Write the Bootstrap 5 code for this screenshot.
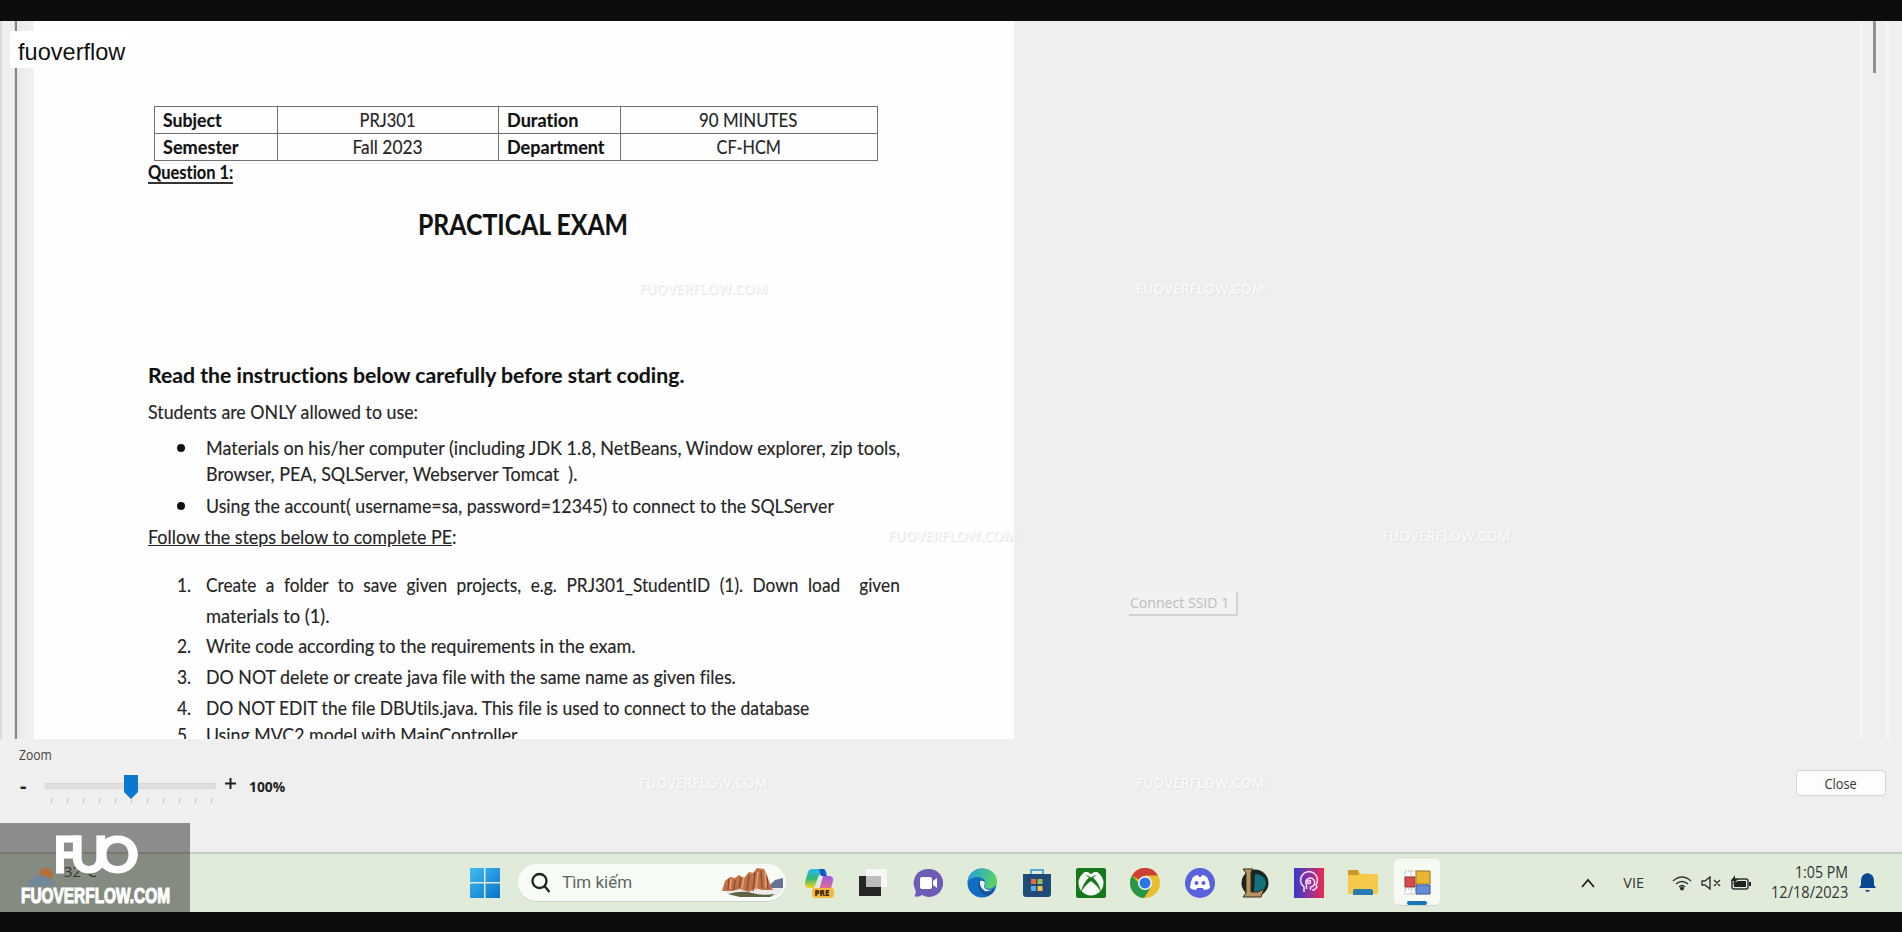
<!DOCTYPE html>
<html lang="en">
<head>
<meta charset="utf-8">
<title>PRJ301 Practical Exam</title>
<link href="https://cdn.jsdelivr.net/npm/bootstrap@5.3.0/dist/css/bootstrap.min.css" rel="stylesheet">
<style>
body{background:#0d0d0d;width:1902px;height:932px;overflow:hidden;font-family:"Open Sans",sans-serif;color:#222}
.screen{margin-top:21px;height:891px;background:#efefef}
.viewer{height:718px;overflow:hidden}
.gutter{width:15px;border-right:1px solid #dcdcdc;background:linear-gradient(90deg,#dadada 2px,#efefef 2px)}
.edge-line{width:2px;background:#858585}
.margin-strip{width:17px;background:linear-gradient(90deg,#e9e9e9,#f2f2f2)}
.sheet{width:980px;background:#fefefe;padding:85px 0 0 113.500px;font-family:Lato,sans-serif;font-size:18.6px;color:#252525;font-variant-ligatures:none;-webkit-text-stroke:.15px #252525}
.scrolls{width:42px;border-left:3px solid #f5f5f5}
.thumb-line{width:3px;height:52px;margin-left:10px;background:#929292}
.scroll-edge{width:3px;margin-left:10px;background:#f6f6f6;height:718px}
.fit{display:inline-block;white-space:nowrap;transform-origin:0 50%}
.info{width:724px;height:55px;margin-left:6px;display:grid;grid-template-columns:122px 220px 121px 1fr;grid-template-rows:26px 26px;gap:1px;padding:1px;background:#727272;line-height:26px}
.info>div{background:#fefefe;padding-left:8px;overflow:hidden}
.info>.mid{padding:0;text-align:center}
.info .mid .fit{transform-origin:50% 50%}
.heavy{font-weight:700;color:#111}
.q1{height:22px;line-height:22px;margin-top:0}
.under{border-bottom:2px solid #333;line-height:19px}
.title{font-size:28px;line-height:40px;height:40px;margin:21px 0 0 270.500px}
.lead-line{font-size:21.6px;line-height:30px;height:30px;margin-top:116px}
.ln{height:26px;line-height:26px;display:flex}
.mk{width:58px;padding-left:29px;flex:none}
.dot{width:8px;height:8px;border-radius:50%;background:#111;display:block;margin:9px 0 0 0}
.steps{margin-top:20px}
.steps .ln{height:30.7px;line-height:30.7px}
.wide{word-spacing:5.5px}
.panel{height:113px;padding-left:19px;position:relative}
.zoomlabel{font-size:14px;height:24px;line-height:20px;padding-top:6px;color:#444}
.track{width:171px;height:6px;background:#dfdfdf;border:1px solid #d8d8d8}
.zoomrow{height:28px;margin-top:9px}
.ticks{width:171px;height:5px;margin:-2px 0 0 27px;padding:0 5px}
.ticks i{width:1px;height:5px;background:#c4c4c4}
.closebtn{width:90px;height:26px;border:1px solid #d5d5d5;border-radius:4px;background:#fdfdfd;font-size:14px;line-height:23px;padding:0;position:absolute;right:16px;top:31px;color:#333;text-align:center}
.closebtn .fit{transform-origin:50% 50%}
.taskbar{height:60px;border-top:2px solid #c5cdc1;background:#e0ecd9;padding-left:470px}
.taskbar svg{flex:none;display:block}
.pill{width:268px;height:38px;margin-left:18px;border-radius:19px;background:#f8fcf6;border-bottom:1px solid #ccd5c7;padding-left:13px;font-size:17px;color:#626662;font-family:Roboto,sans-serif}
.apps{margin-left:18px;gap:24.4px}
.active-app{width:46px;height:47px;border-radius:5px;background:#f6faf3;border-bottom:1px solid #ccd5c7;margin-left:-8px;margin-top:-2px;position:relative}
.active-app i{position:absolute;left:13px;bottom:0;width:20px;height:4px;border-radius:2px;background:#1874b8}
.tray{margin-left:141px;color:#333}
.clock{font-size:15.5px;line-height:20px;width:90px;text-align:right;margin-top:-3px}
.tag{position:absolute;left:10px;top:31px;width:119px;height:37px;background:#fff;font:24px/42px "Liberation Sans",sans-serif;padding-left:8px;color:#111;white-space:nowrap}
.brand{position:absolute;left:0;top:823px;width:190px;height:89px;background:rgba(30,30,30,.47)}
.ghost{position:absolute;width:128px;text-align:center;font:600 13.8px/18px "Open Sans",sans-serif;color:#fafafa;text-shadow:1px 1px 1px #e0e0e0;white-space:nowrap}
.ssid{position:absolute;left:1129px;top:592px;width:109px;height:24px;background:#f2f2f2;border-right:2px solid #d2d2d2;border-bottom:2px solid #d2d2d2;color:#bdbdbd;font-size:14.5px;line-height:22px;padding-left:1px}
</style>
<script src="https://cdn.jsdelivr.net/npm/bootstrap@5.3.0/dist/js/bootstrap.bundle.min.js"></script>
</head>
<body>
<div class="screen">
  <main class="viewer d-flex">
    <div class="gutter"></div><div class="edge-line"></div><div class="margin-strip"></div>
    <article class="sheet">
      <div class="info">
        <div class="heavy"><span class="fit" data-w="59">Subject</span></div><div class="mid"><span class="fit" data-w="56">PRJ301</span></div>
        <div class="heavy"><span class="fit" data-w="71">Duration</span></div><div class="mid"><span class="fit" data-w="98">90 MINUTES</span></div>
        <div class="heavy"><span class="fit" data-w="75">Semester</span></div><div class="mid"><span class="fit" data-w="70">Fall 2023</span></div>
        <div class="heavy"><span class="fit" data-w="98">Department</span></div><div class="mid"><span class="fit" data-w="64">CF-HCM</span></div>
      </div>
      <div class="q1 heavy"><span class="fit under" data-w="85">Question 1:</span></div>
      <div class="title heavy"><span class="fit" data-w="210">PRACTICAL EXAM</span></div>
      <div class="lead-line heavy"><span class="fit" data-w="536">Read the instructions below carefully before start coding.</span></div>
      <div class="ln" style="margin-top:9px"><span class="fit" data-w="270">Students are ONLY allowed to use:</span></div>
      <div class="ln" style="margin-top:10px"><span class="mk"><i class="dot"></i></span><span class="fit" data-w="694">Materials on his/her computer (including JDK 1.8, NetBeans, Window explorer, zip tools,</span></div>
      <div class="ln"><span class="mk"></span><span class="fit" data-w="371">Browser, PEA, SQLServer, Webserver Tomcat&nbsp; ).</span></div>
      <div class="ln" style="margin-top:6px"><span class="mk"><i class="dot"></i></span><span class="fit" data-w="628">Using the account( username=sa, password=12345) to connect to the SQLServer</span></div>
      <div class="ln" style="margin-top:5px"><span class="fit" data-w="309"><u>Follow the steps below to complete PE</u>:</span></div>
      <div class="steps">
        <div class="ln"><span class="mk"><span class="fit" data-w="14">1.</span></span><span class="fit wide" data-w="694">Create a folder to save given projects, e.g. PRJ301_StudentID (1). Down load&nbsp; given</span></div>
        <div class="ln"><span class="mk"></span><span class="fit" data-w="124">materials to (1).</span></div>
        <div class="ln"><span class="mk"><span class="fit" data-w="14">2.</span></span><span class="fit" data-w="430">Write code according to the requirements in the exam.</span></div>
        <div class="ln"><span class="mk"><span class="fit" data-w="14">3.</span></span><span class="fit" data-w="530">DO NOT delete or create java file with the same name as given files.</span></div>
        <div class="ln"><span class="mk"><span class="fit" data-w="14">4.</span></span><span class="fit" data-w="603">DO NOT EDIT the file DBUtils.java. This file is used to connect to the database</span></div>
        <div class="ln" style="margin-top:-3px"><span class="mk"><span class="fit" data-w="14">5.</span></span><span class="fit" data-w="312">Using MVC2 model with MainController</span></div>
      </div>
    </article>
    <div class="scrolls d-flex ms-auto"><div class="thumb-line"></div><div class="scroll-edge"></div></div>
  </main>
  <section class="panel">
    <div class="zoomlabel"><span class="fit" data-w="33">Zoom</span></div>
    <div class="zoomrow d-flex align-items-center">
      <b style="width:26px;padding-left:1px" class="fs-5 lh-1">-</b>
      <div class="track position-relative">
        <svg class="position-absolute" style="left:78px;top:-9px" width="15" height="24"><path d="M0 0h14v17l-7 7-7-7z" fill="#0878d0"/></svg>
      </div>
      <svg class="ms-2" width="13" height="13" style="margin-top:-5px"><path d="M6.500 1v11M1 6.500h11" stroke="#222" stroke-width="2"/></svg>
      <b class="fit" style="margin-left:12px;font-size:15px" data-w="36">100%</b>
    </div>
    <div class="ticks d-flex justify-content-between"><i></i><i></i><i></i><i></i><i></i><i></i><i></i><i></i><i></i><i></i><i></i></div>
    <button class="btn closebtn"><span class="fit" data-w="32">Close</span></button>
  </section>
  <footer class="taskbar d-flex align-items-center">
    <svg width="30" height="30"><defs><linearGradient id="w" x2="1" y2="1"><stop stop-color="#42bdf2"/><stop offset="1" stop-color="#0873ca"/></linearGradient></defs><path d="M0 0h14v14H0zM15.500 0H30v14H15.500zM0 15.500h14V30H0zM15.500 15.500H30V30H15.500z" fill="url(#w)"/></svg>
    <div class="pill d-flex align-items-center">
      <svg width="20" height="22" fill="none" stroke="#222" stroke-width="2.300"><circle cx="8.500" cy="9" r="7"/><path d="M13.500 14l5 6"/></svg>
      <span style="margin-left:11px"><span class="fit" data-w="70">Tìm kiếm</span></span>
      <svg class="ms-auto" width="65" height="30" viewBox="0 0 65 30"><path d="M2 22Q6 28 18 29h31q10-1 13-8V10l-8 4z" fill="#ecebea"/><path d="M46 20l8-8 8-2v10z" fill="#697194"/><path d="M1 23l3-10 5-4 5 1 4-3 5 3 5-6 4 1 4-5 7 1 3 6 3 9 3 6-11 0-6-2-7 4-9-3-8 2z" fill="#bf7148"/><path d="M8 11l-1 11M14 12l-1 10M20 10l-2 10M28 7l-2 15M34 4l-2 19M40 3l1 17M46 9l1 12" stroke="#8a4a2e" stroke-width="1.300"/><path d="M10 11l-1 10M23 9l-2 12M37 4l-2 18M44 4l1 15" stroke="#e9a474" stroke-width="1.500"/><path d="M7 26q14-4 24-1t23 1l-5 3H19z" fill="#5d6344"/></svg>
    </div>
    <div class="apps d-flex align-items-center">
      <svg width="30" height="30" viewBox="0 0 30 30"><defs><linearGradient id="c1" x2="0" y2="1"><stop stop-color="#22b9ef"/><stop offset=".5" stop-color="#37b47b"/><stop offset="1" stop-color="#f5d51e"/></linearGradient><linearGradient id="c2" x2="0" y2="1"><stop stop-color="#9c5be6"/><stop offset="1" stop-color="#f5717a"/></linearGradient></defs><path d="M8 1h11q3 0 4 5l-8 1-5 13H4q-4-1-3-6L4 4q1-3 4-3z" fill="url(#c1)"/><path d="M15 1h5l3 7h-6z" fill="#1d52c8"/><path d="M19 8h7q4 1 3 5l-3 11H12q3 0 4-5z" fill="url(#c2)"/><rect x="8" y="20" width="22" height="10" rx="3" fill="#f4ba42"/><text x="10.500" y="28" font-family="Open Sans" font-size="8" font-weight="800" fill="#3d2606">PRE</text></svg>
      <svg width="30" height="30"><path d="M1 8h22v20H1z" fill="#252725"/><path d="M8 1h21v18H8z" fill="#fafafa" opacity=".85"/><path d="M8 8h15v11H8z" fill="#bdbdbd"/></svg>
      <svg width="30" height="30"><path d="M15 1a14 14 0 1 1-6 26q-4 3-8 1 3-2 1-7A14 14 0 0 1 15 1z" fill="#6e5bb5"/><rect x="7" y="9" width="12" height="12" rx="2" fill="#fff"/><path d="M20 13l4-3v10l-4-3z" fill="#fff"/></svg>
      <svg width="30" height="30" viewBox="0 0 30 30"><defs><linearGradient id="e1" x2="1" y2=".3"><stop stop-color="#1d9ee5"/><stop offset="1" stop-color="#5bd069"/></linearGradient></defs><circle cx="15" cy="15" r="14.500" fill="#126dc0"/><path d="M.5 15C1-4 29-4 30 13c0 7-9 10-13 6 4-5-1-11-8-10-5 1-8 3-8.500 6z" fill="url(#e1)"/><path d="M11 15q4-4 7-1-3 8 5 8 4 0 5-1-2 6-8 7-9-2-9-13z" fill="#1656a0"/><path d="M13 13q4-1 5 2-3 6 4 7 4 0 6-2-5 4-10 3-6-4-5-10z" fill="#e9f6f5"/></svg>
      <svg width="30" height="30"><path d="M9 7V2h12v5" fill="none" stroke="#58a9d1" stroke-width="2"/><path d="M1 6h28v20q0 3-3 3H4q-3 0-3-3z" fill="#204a77"/><path d="M9 11h5v5H9z" fill="#e66a43"/><path d="M15.500 11h5v5h-5z" fill="#9bbf48"/><path d="M9 18h5v5H9z" fill="#55aee0"/><path d="M15.500 18h5v5h-5z" fill="#f1bf45"/></svg>
      <svg width="30" height="30"><rect width="30" height="30" rx="2" fill="#15771b"/><circle cx="15" cy="15" r="12.500" fill="#f6fbf5"/><path d="M4.500 25Q7 15 13 9.500L9 7q3 0 6 2.500Q18 7 21 7l-4 2.500Q23 15 25.500 25 21 17 15 13 9 17 4.500 25z" fill="#15771b"/><path d="M8 3.500q4-.5 7 2.500 3-3 7-2.500-7-3.500-14 0z" fill="#15771b"/></svg>
      <svg width="30" height="30" viewBox="0 0 30 30"><circle cx="15" cy="15" r="15" fill="#e9bd2d"/><path d="M15 15L2 7.500A15 15 0 0 1 28 7.500H15z" fill="#cf3e32"/><path d="M15 22L2 7.500A15 15 0 0 0 14 30l7-11z" fill="#25964a"/><circle cx="15" cy="15" r="7" fill="#f3f7fb"/><circle cx="15" cy="15" r="5.500" fill="#2b78e4"/></svg>
      <svg width="30" height="30"><circle cx="15" cy="15" r="15" fill="#5862dc"/><path d="M8 9q3-2 5-2l1 2h2l1-2q2 0 5 2 3 5 3 11-3 2-6 2l-1-2h-6l-1 2q-3 0-6-2 0-6 3-11z" fill="#fff"/><circle cx="11.500" cy="15" r="2" fill="#5862dc"/><circle cx="18.500" cy="15" r="2" fill="#5862dc"/></svg>
      <svg width="30" height="30"><circle cx="16" cy="15" r="13.500" fill="#1d2522"/><path d="M16 6a10 10 0 0 1 11 10l-3 8h-9z" fill="#11717c"/><path d="M4 1h10l-2 3v20h7l6-3-3 8H4l3-4V5z" fill="#b89560" stroke="#3c2b18"/></svg>
      <svg width="30" height="30"><defs><linearGradient id="p" x2="1" y2="0"><stop stop-color="#363bc3"/><stop offset=".5" stop-color="#8d329d"/><stop offset="1" stop-color="#ee294c"/></linearGradient></defs><path d="M0 0h30v30H0z" fill="url(#p)"/><g fill="none" stroke="#efd8f5" stroke-width="1.600"><path d="M10 24v-5a8.500 8.500 0 1 1 12-2l1 2-3 3h-2"/><path d="M12.500 21v-4a4.500 4.500 0 1 1 4 2v3"/><circle cx="15" cy="14" r="1.600"/></g></svg>
      <svg width="30" height="30"><path d="M0 3q0-1 2-1h8l3 4h17v20H0z" fill="#f5c94a"/><path d="M0 3q0-1 2-1h8l1 5H0z" fill="#c9982d"/><path d="M5 27v-4q0-2 2-2h16q2 0 2 2v4z" fill="#277bb1"/></svg>
      <div class="active-app"><svg class="position-absolute" style="left:10px;top:11px" width="28" height="26"><path d="M1 1h25v23H1zM7 1v23M1 7h12M1 19h12" fill="#fff" stroke="#b9bab8" stroke-dasharray="2 1"/><path d="M1 7h10v10H1z" fill="#d54b4b" stroke="#943d3b"/><path d="M12 1h14v13H12z" fill="#e9b62d" stroke="#997c32"/><path d="M12 15h14v9H12z" fill="#638ddb" stroke="#405b9d"/></svg><i></i></div>
    </div>
    <div class="tray d-flex align-items-center">
      <svg width="14" height="10"><path d="M1 9l6-7 6 7" fill="none" stroke="#222" stroke-width="1.800"/></svg>
      <span style="margin-left:28px;font-size:14.500px"><span class="fit" data-w="21">VIE</span></span>
      <svg style="margin-left:28px" width="20" height="16" fill="none" stroke="#333" stroke-width="1.500"><path d="M1 6q9-8 18 0M4 9q6-5 12 0M7 12q3-3 6 0"/><circle cx="10" cy="13.500" r="1.300" fill="#222"/></svg>
      <svg style="margin-left:9px" width="20" height="14" fill="none" stroke="#333" stroke-width="1.400"><path d="M1 5h3l5-4v12L4 9H1zM13 4l6 6M19 4l-6 6"/></svg>
      <svg style="margin-left:9px" width="22" height="16"><rect x="2" y="4" width="16" height="10" rx="2" fill="none" stroke="#333" stroke-width="1.500"/><path d="M4 12V8l4-2h8v6z" fill="#222"/><path d="M19 7h2v4h-2zM5 0L1 6h3l-1 4 5-6H5z" fill="#222"/></svg>
      <div class="clock" style="margin-left:6px"><div><span class="fit e" data-w="53">1:05 PM</span></div><div><span class="fit e" data-w="77">12/18/2023</span></div></div>
      <svg style="margin-left:11px" width="17" height="20"><path d="M0 15l2-3V8q0-7 6.500-8Q15 1 15 8v4l2 3zM6 17h5q-2.500 4-5 0z" fill="#0b4692"/></svg>
    </div>
  </footer>
</div>

<div class="tag"><span class="fit" data-w="107">fuoverflow</span></div>
<div class="ssid"><span class="fit" data-w="99">Connect SSID 1</span></div>
<div class="ghost" style="left:639px;top:280px">FUOVERFLOW.COM</div>
<div class="ghost" style="left:1136px;top:280px">FUOVERFLOW.COM</div>
<div class="ghost" style="left:888px;top:527px">FUOVERFLOW.COM</div>
<div class="ghost" style="left:1382px;top:527px">FUOVERFLOW.COM</div>
<div class="ghost" style="left:639px;top:774px">FUOVERFLOW.COM</div>
<div class="ghost" style="left:1136px;top:774px">FUOVERFLOW.COM</div>
<div class="brand"><svg width="190" height="89">
  <g transform="translate(25 22)"><circle cx="21" cy="30" r="7" fill="#b5703a"/><path d="M1 41q1-8 9-9 5-4 12 0 7 2 8 9z" fill="#71889b"/></g>
  <text x="64" y="54" font-family="Open Sans" font-size="15" fill="#333">32°C</text>
  <g fill="#fff" stroke="#fff" stroke-width="1" font-family="Lato" font-weight="900" font-size="51"><text x="53" y="50" textLength="26" lengthAdjust="spacingAndGlyphs">F</text><text x="70" y="50" textLength="38" lengthAdjust="spacingAndGlyphs">U</text><text x="96" y="50" textLength="43" lengthAdjust="spacingAndGlyphs">O</text></g>
  <text x="21" y="80" fill="#fff" stroke="#fff" stroke-width="1.200" font-family="Liberation Sans" font-weight="700" font-size="22.500" textLength="149" lengthAdjust="spacingAndGlyphs">FUOVERFLOW.COM</text>
</svg></div>
<script>
document.querySelectorAll('.e').forEach(function(n){n.style.transformOrigin='100% 50%'});
document.querySelectorAll('.fit').forEach(function(n){
  n.style.transform='scaleX('+(n.dataset.w/n.offsetWidth)+')';
  var p=n.parentElement;
  if(p.tagName==='SPAN'&&!p.classList.contains('mk')){p.style.width=n.dataset.w+'px';p.style.display='inline-block';p.style.whiteSpace='nowrap'}
});
</script>
</body>
</html>
